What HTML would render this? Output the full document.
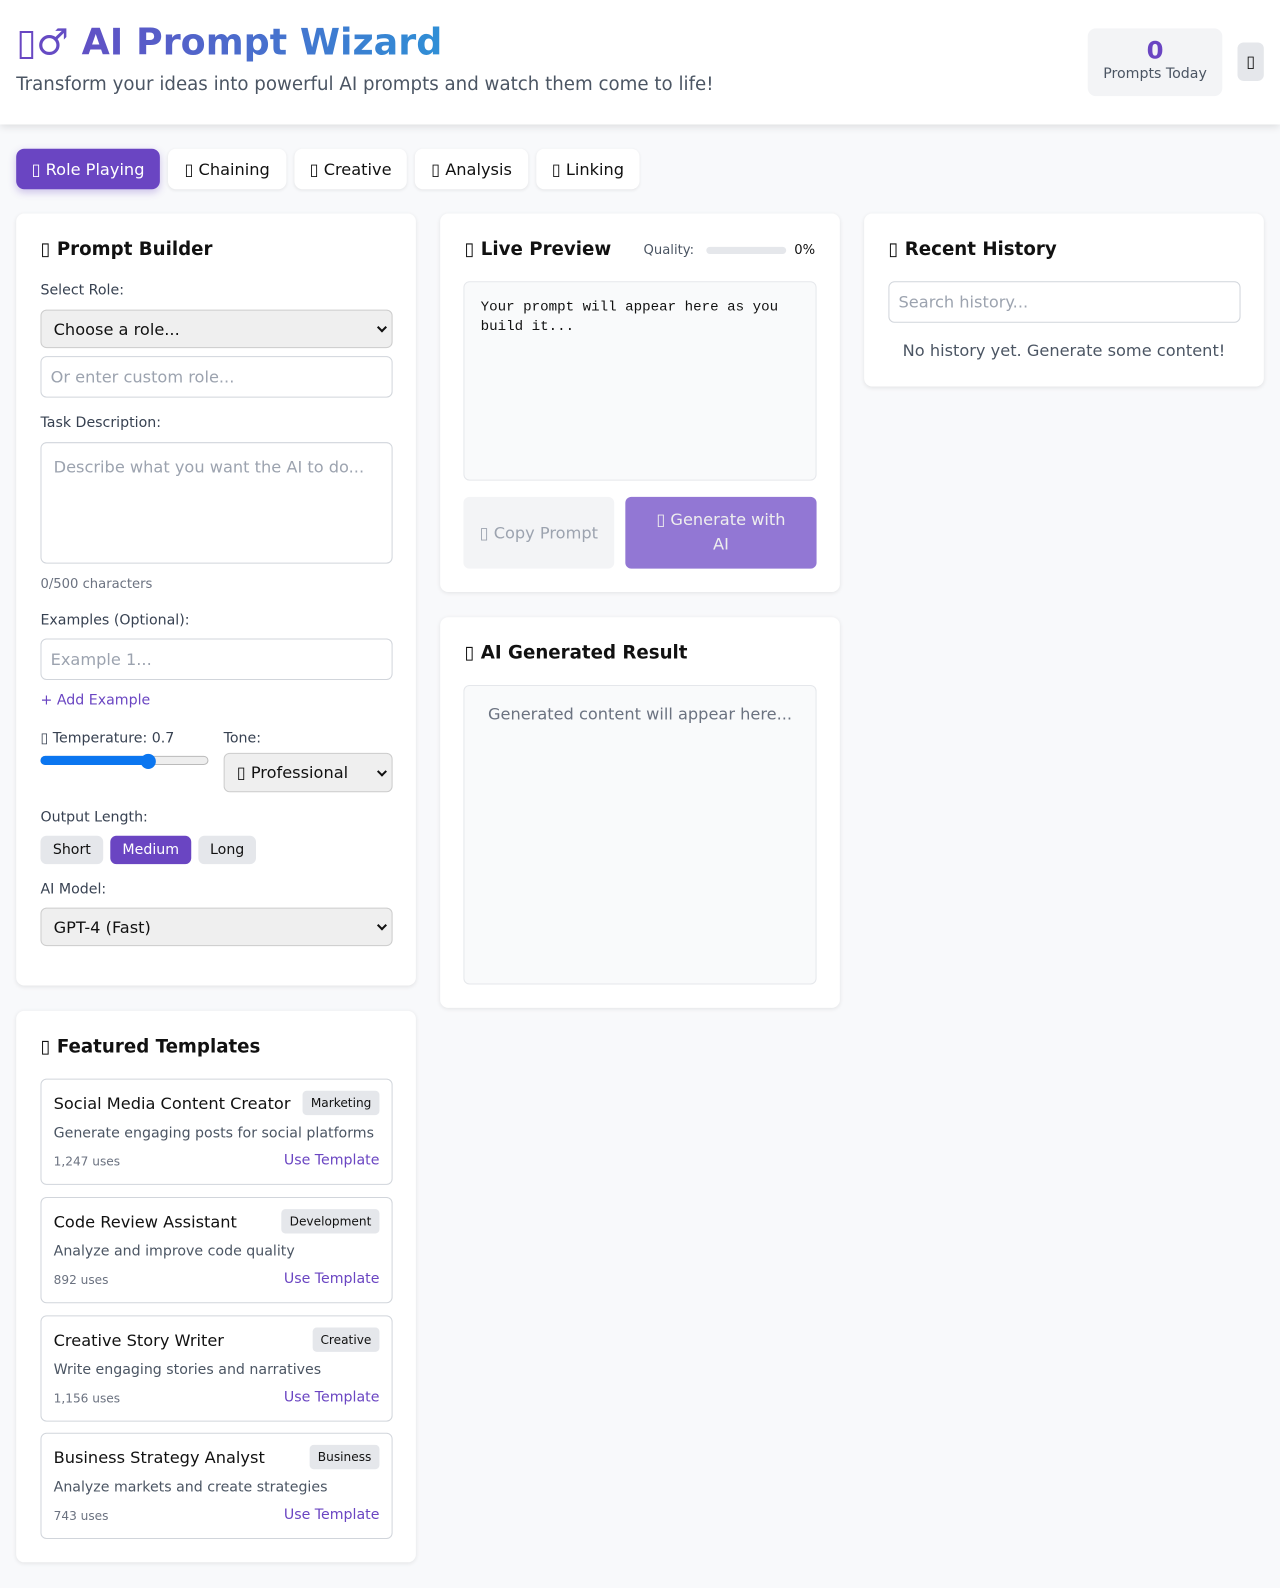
<!DOCTYPE html>
<html><head><meta charset="utf-8"><style>
*{box-sizing:border-box;margin:0;padding:0}
html,body{width:1280px;height:1587px;overflow:hidden;background:#f8f9fb}
body{font-family:"DejaVu Sans","Liberation Sans",sans-serif;color:#111}
#w{position:absolute;left:0;top:0;width:1265px;height:1569px;transform:scale(1.01186);transform-origin:0 0}
.a{position:absolute;white-space:nowrap}
.hdr{position:absolute;left:0;top:0;width:1265px;height:123px;background:#fff;box-shadow:0 2px 8px rgba(0,0,0,.12)}
.title{font-size:36px;font-weight:bold;background:linear-gradient(90deg,#6a45c2,#2f8fd6);-webkit-background-clip:text;background-clip:text;color:transparent;line-height:1}
.card{position:absolute;background:#fff;border-radius:8px;box-shadow:0 1px 4px rgba(0,0,0,.09)}
.h{font-size:18px;font-weight:bold;line-height:22px}
.lbl{font-size:14px;color:#374151;line-height:16px}
.box{position:absolute;border:1px solid #d1d5db;border-radius:6px;background:#fff}
.sel{position:absolute;border:1px solid #ccc;border-radius:6px;background:#efefef;font-size:16px;padding-left:12px;display:flex;align-items:center}
.sel:after{content:"";position:absolute;right:6px;top:50%;width:5px;height:5px;border-right:2px solid #111;border-bottom:2px solid #111;transform:translateY(-70%) rotate(45deg)}
.ph{font-size:16px;color:#9ca3af;position:absolute;left:9px}
.tab{position:absolute;top:147px;height:40px;border-radius:8px;background:#fff;font-size:16px;display:flex;align-items:center;justify-content:center;box-shadow:0 1px 3px rgba(0,0,0,.08)}
.pill{position:absolute;top:826px;height:28px;border-radius:6px;background:#e5e7eb;font-size:14px;display:flex;align-items:center;justify-content:center}
.tpl{position:absolute;left:24px;width:348px;height:105px;border:1px solid #d1d5db;border-radius:6px}
.tn{position:absolute;left:12px;top:14px;font-size:16px}
.tg{position:absolute;right:12px;top:11px;height:24px;background:#e5e7eb;border-radius:4px;font-size:12px;padding:0 8px;line-height:24px}
.td{position:absolute;left:12px;top:45px;font-size:14px;color:#4b5563}
.tu{position:absolute;left:12px;top:74px;font-size:12px;color:#6b7280}
.tl{position:absolute;right:12px;top:72px;font-size:14px;color:#6a45c2}
</style></head><body><div id="w">
<div class="hdr">
 <div class="a title" style="left:16px;top:25px">▯♂ AI Prompt Wizard</div>
 <div class="a" style="left:16px;top:73px;font-size:18px;color:#4b5563">Transform your ideas into powerful AI prompts and watch them come to life!</div>
 <div class="a" style="left:1075px;top:28px;width:133px;height:67px;background:#f3f4f6;border-radius:8px;text-align:center">
  <div style="font-size:24px;font-weight:bold;color:#6a45c2;margin-top:8px;line-height:28px">0</div>
  <div style="font-size:14px;color:#4b5563;line-height:18px">Prompts Today</div></div>
 <div class="a" style="left:1223px;top:42px;width:26px;height:38px;background:#e5e7eb;border-radius:6px;text-align:center;line-height:38px;font-size:16px">▯</div>
</div>
<div class="tab" style="left:16px;width:142px;background:#6a45c2;color:#fff;box-shadow:0 3px 8px rgba(106,69,194,.3)">▯ Role Playing</div>
<div class="tab" style="left:166px;width:117px">▯ Chaining</div>
<div class="tab" style="left:291px;width:111px">▯ Creative</div>
<div class="tab" style="left:410px;width:112px">▯ Analysis</div>
<div class="tab" style="left:530px;width:102px">▯ Linking</div>

<div class="card" style="left:16px;top:211px;width:395px;height:763px">
 <div class="a h" style="left:24px;top:25px">▯ Prompt Builder</div>
 <div class="a lbl" style="left:24px;top:68px">Select Role:</div>
 <div class="sel" style="left:24px;top:95px;width:348px;height:38px">Choose a role...</div>
 <div class="box" style="left:24px;top:141px;width:348px;height:41px"><span class="ph" style="top:10px">Or enter custom role...</span></div>
 <div class="a lbl" style="left:24px;top:199px">Task Description:</div>
 <div class="box" style="left:24px;top:226px;width:348px;height:120px"><span class="ph" style="left:12px;top:14px">Describe what you want the AI to do...</span></div>
 <div class="a" style="left:24px;top:359px;font-size:13px;color:#6b7280">0/500 characters</div>
 <div class="a lbl" style="left:24px;top:394px">Examples (Optional):</div>
 <div class="box" style="left:24px;top:420px;width:348px;height:41px"><span class="ph" style="top:10px">Example 1...</span></div>
 <div class="a" style="left:24px;top:473px;font-size:14px;color:#6a45c2">+ Add Example</div>
 <div class="a lbl" style="left:24px;top:511px">▯ Temperature: 0.7</div>
 <div class="a" style="left:24px;top:536px;width:166px;height:9px;border-radius:5px;background:#eee;border:1px solid #bbb"></div>
 <div class="a" style="left:24px;top:536px;width:110px;height:9px;border-radius:5px;background:#0b76f0"></div>
 <div class="a" style="left:123px;top:534px;width:15px;height:15px;border-radius:50%;background:#0b76f0"></div>
 <div class="a lbl" style="left:205px;top:511px">Tone:</div>
 <div class="sel" style="left:205px;top:533px;width:167px;height:39px">▯ Professional</div>
 <div class="a lbl" style="left:24px;top:589px">Output Length:</div>
 <div class="pill" style="left:24px;width:62px;top:615px">Short</div>
 <div class="pill" style="left:93px;width:80px;top:615px;background:#6a45c2;color:#fff">Medium</div>
 <div class="pill" style="left:180px;width:57px;top:615px">Long</div>
 <div class="a lbl" style="left:24px;top:660px">AI Model:</div>
 <div class="sel" style="left:24px;top:686px;width:348px;height:38px">GPT-4 (Fast)</div>
</div>

<div class="card" style="left:16px;top:999px;width:395px;height:545px">
 <div class="a h" style="left:24px;top:25px">▯ Featured Templates</div>
 <div class="tpl" style="top:67px"><div class="tn">Social Media Content Creator</div><div class="tg">Marketing</div><div class="td">Generate engaging posts for social platforms</div><div class="tu">1,247 uses</div><div class="tl">Use Template</div></div>
 <div class="tpl" style="top:184px"><div class="tn">Code Review Assistant</div><div class="tg">Development</div><div class="td">Analyze and improve code quality</div><div class="tu">892 uses</div><div class="tl">Use Template</div></div>
 <div class="tpl" style="top:301px"><div class="tn">Creative Story Writer</div><div class="tg">Creative</div><div class="td">Write engaging stories and narratives</div><div class="tu">1,156 uses</div><div class="tl">Use Template</div></div>
 <div class="tpl" style="top:417px"><div class="tn">Business Strategy Analyst</div><div class="tg">Business</div><div class="td">Analyze markets and create strategies</div><div class="tu">743 uses</div><div class="tl">Use Template</div></div>
</div>

<div class="card" style="left:435px;top:211px;width:395px;height:374px">
 <div class="a h" style="left:24px;top:25px">▯ Live Preview</div>
 <div class="a" style="left:201px;top:29px;font-size:13px;color:#4b5563">Quality:</div>
 <div class="a" style="left:263px;top:33px;width:79px;height:7px;border-radius:4px;background:#e5e7eb"></div>
 <div class="a" style="left:350px;top:29px;font-size:13px">0%</div>
 <div class="box" style="left:23px;top:67px;width:349px;height:197px;background:#f9fafb;border-color:#e5e7eb"><div style="font-family:'Liberation Mono',monospace;font-size:14px;line-height:19px;padding:16px 16px;color:#111">Your prompt will appear here as you<br>build it...</div></div>
 <div class="a" style="left:23px;top:280px;width:149px;height:71px;background:#f3f4f6;border-radius:6px;color:#9ca3af;font-size:16px;text-align:center;line-height:71px">▯ Copy Prompt</div>
 <div class="a" style="left:183px;top:280px;width:189px;height:71px;background:#9277d4;border-radius:6px;color:#eee;font-size:16px;text-align:center;line-height:24px;padding-top:11px">▯ Generate with<br>AI</div>
</div>

<div class="card" style="left:435px;top:610px;width:395px;height:386px">
 <div class="a h" style="left:24px;top:25px">▯ AI Generated Result</div>
 <div class="box" style="left:23px;top:67px;width:349px;height:296px;background:#f9fafb;border-color:#e5e7eb"><div style="text-align:center;font-size:16px;color:#6b7280;margin-top:18px">Generated content will appear here...</div></div>
</div>

<div class="card" style="left:854px;top:211px;width:395px;height:171px">
 <div class="a h" style="left:24px;top:25px">▯ Recent History</div>
 <div class="box" style="left:24px;top:67px;width:348px;height:41px"><span class="ph" style="top:10px">Search history...</span></div>
 <div class="a" style="left:0;width:395px;text-align:center;top:126px;font-size:16px;color:#4b5563">No history yet. Generate some content!</div>
</div>
</div></body></html>
